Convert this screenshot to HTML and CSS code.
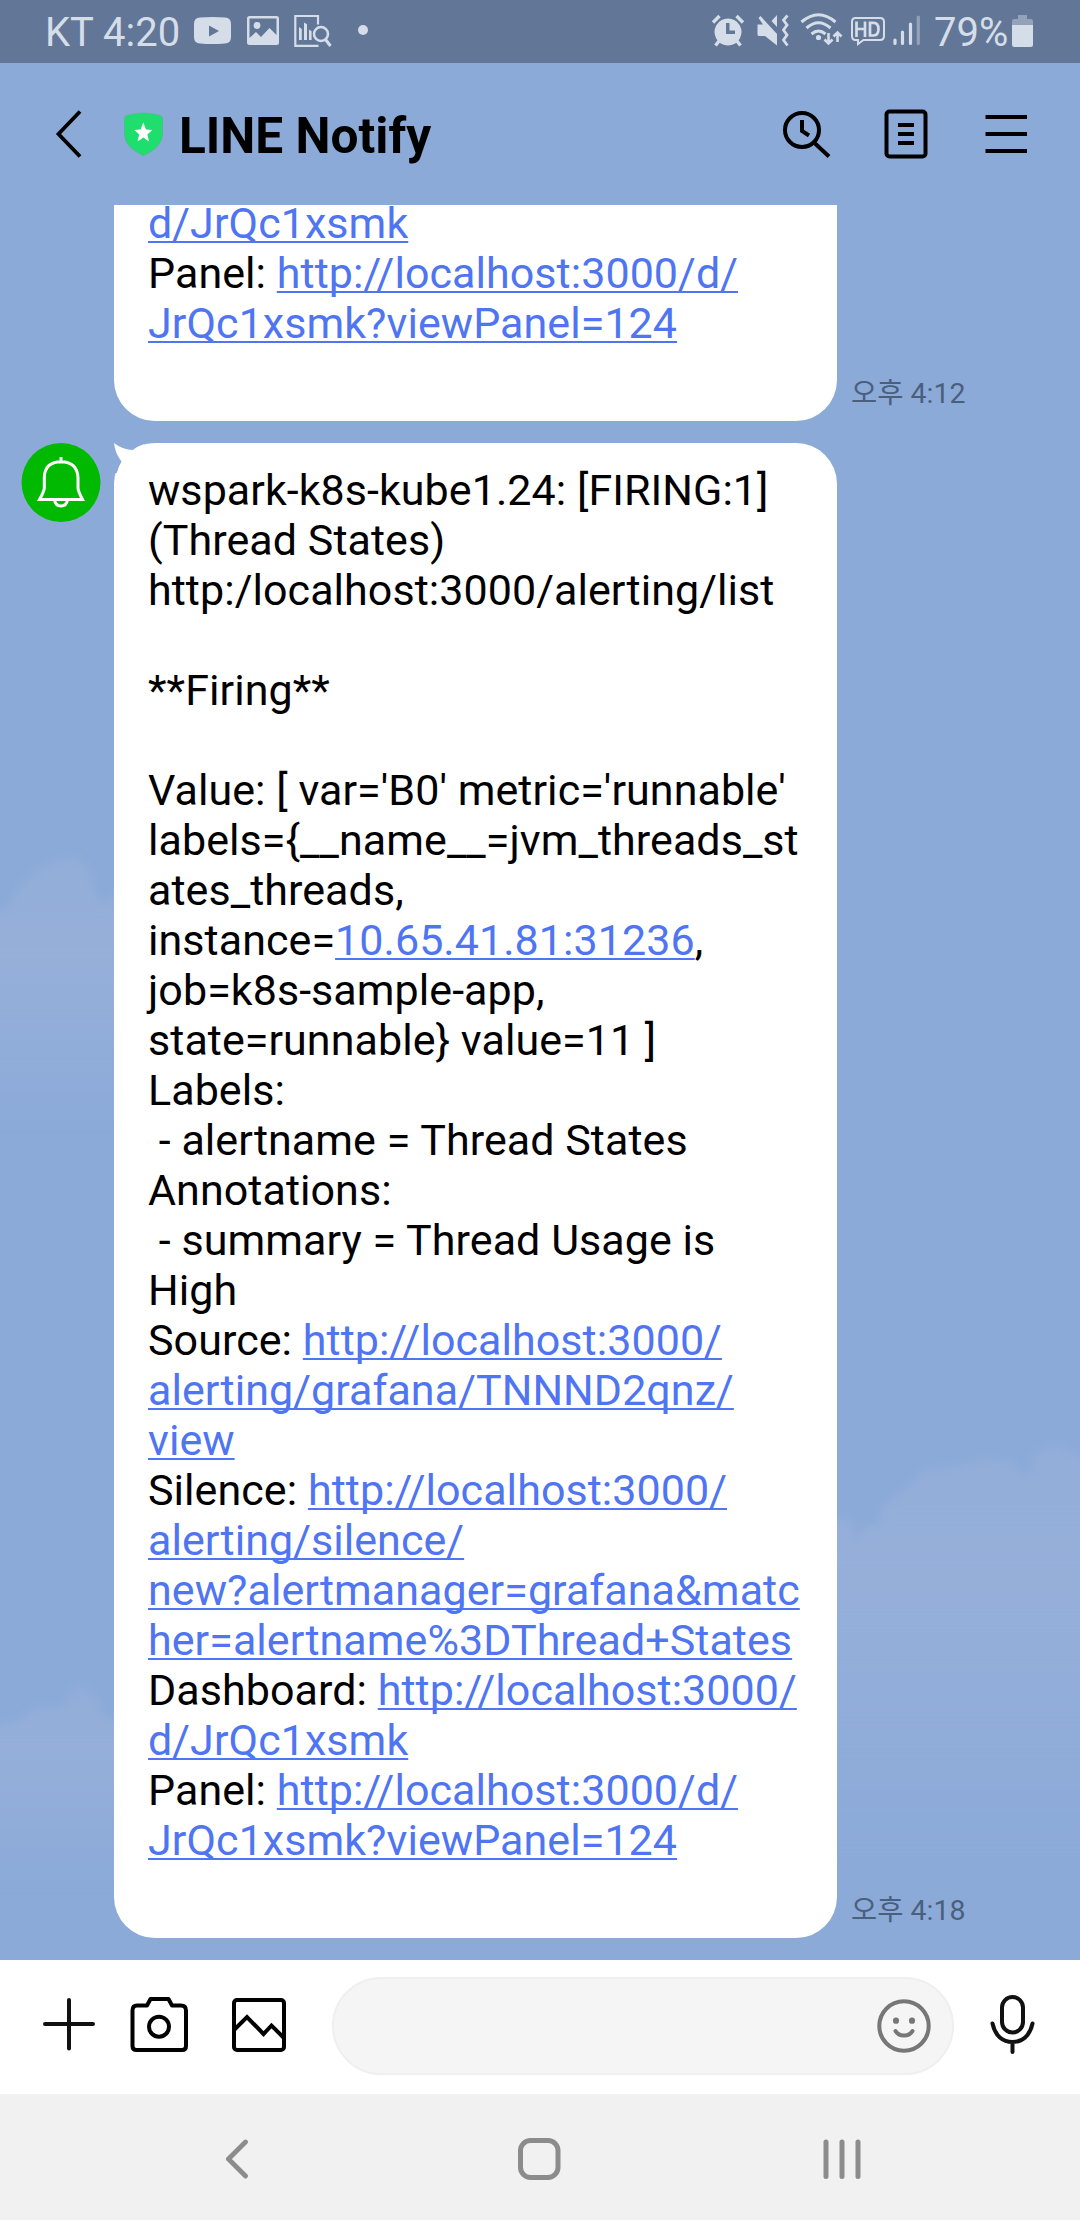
FILE: index.html
```html
<!DOCTYPE html>
<html lang="ko">
<head>
<meta charset="utf-8">
<title>LINE Notify</title>
<link rel="stylesheet" href="styles.css">
</head>
<body>
<div class="screen">
  <svg class="clouds" viewBox="0 0 1080 1960" aria-hidden="true">
    <defs>
      <linearGradient id="fadeA" gradientUnits="userSpaceOnUse" x1="0" y1="860" x2="0" y2="1130"><stop offset="0" stop-color="#98b1da" stop-opacity=".5"/><stop offset=".35" stop-color="#98b1da" stop-opacity=".8"/><stop offset="1" stop-color="#98b1da" stop-opacity="0"/></linearGradient>
      <linearGradient id="fadeB" gradientUnits="userSpaceOnUse" x1="0" y1="1445" x2="0" y2="1860"><stop offset="0" stop-color="#98b1da" stop-opacity=".5"/><stop offset=".3" stop-color="#98b1da" stop-opacity=".8"/><stop offset="1" stop-color="#98b1da" stop-opacity="0"/></linearGradient>
      <linearGradient id="fadeC" gradientUnits="userSpaceOnUse" x1="0" y1="1688" x2="0" y2="1890"><stop offset="0" stop-color="#98b1da" stop-opacity=".45"/><stop offset=".3" stop-color="#98b1da" stop-opacity=".7"/><stop offset="1" stop-color="#98b1da" stop-opacity="0"/></linearGradient>
      <filter id="soft" x="-10%" y="-10%" width="120%" height="120%"><feGaussianBlur stdDeviation="4"/></filter>
    </defs>
    <g filter="url(#soft)">
      <path fill="url(#fadeA)" d="M-20 914 10 908 17 890 35 873 55 860 75 857 90 870 92 885 100 905 107 902 130 885V1130H-20Z"/>
      <path fill="url(#fadeB)" d="M820 1520 850 1520 857 1543 865 1527 880 1523 882 1507 905 1490 925 1470 960 1466 985 1459 1010 1462 1025 1476 1035 1470 1031 1457 1052 1445 1070 1451 1100 1466V1860H820Z"/>
      <path fill="url(#fadeC)" d="M-20 1732 22 1720 35 1708 65 1706 72 1690 85 1687 98 1700 100 1715 130 1726V1890H-20Z"/>
    </g>
  </svg>

  <div class="status">
    <span class="status-text carrier">KT 4:20</span>
    <svg width="180" height="63" viewBox="192 0 180 63" fill="#d5dde8">
      <path fill-rule="evenodd" d="M200 17.600Q212.500 16.600 225 17.600 231 18 231 24V37Q231 43 225 43.500 212.500 44.500 200 43.500 194 43 194 37V24Q194 18 200 17.600ZM209 25.500V36.500L219 31Z"/>
      <path fill-rule="evenodd" d="M249.500 16H276.500Q279 16 279 18.500V42.500Q279 45 276.500 45H249.500Q247 45 247 42.500V18.500Q247 16 249.500 16ZM249.500 18.500V38L256 32 261 37 269.500 28 276.500 35V18.500Z"/>
      <circle cx="257" cy="25.500" r="3.400"/>
      <path fill="none" stroke="#d5dde8" stroke-width="2.200" d="M318 24.500V16H295.300V45.800H318.500"/>
      <path d="M299 27l2.800 2v11H299zM304 22.500l3 1.800V40h-3zM309 29.500l2.600 1.800V40H309z"/>
      <circle cx="321" cy="34" r="7" fill="none" stroke="#d5dde8" stroke-width="2.500"/>
      <path stroke="#d5dde8" stroke-width="3" d="M325.500 39.500 330.500 46"/>
      <circle cx="363" cy="30" r="5"/>
    </svg>
    <svg class="status-right" width="214" height="63" viewBox="710 0 214 63" fill="#d5dde8">
      <path fill-rule="evenodd" d="M728 18.500a13.500 13.500 0 1 0 .01 0zM726 23V34H735V30.500H729.500V23Z"/>
      <path stroke="#d5dde8" stroke-width="3.400" d="M713 22.500 719.500 16M743 22.500 736.500 16M719 41 715.500 45.500M737 41 740.500 45.500"/>
      <path d="M757.500 24.500H763L758.500 18 760.500 16 777 34V45.500L765 36H759Q757.500 36 757.500 34.500ZM777 15V27L771.500 21Z"/>
      <path fill="none" stroke="#d5dde8" stroke-width="2.800" d="M787.500 15.500 783.500 20 787 25 783.500 30 787 35 783.500 40 787.500 45.500"/>
      <path fill="none" stroke="#d5dde8" stroke-width="3" d="M801.500 22Q818.500 7.500 835.500 22M806.500 28Q818.500 17.500 830.500 28M811.500 34Q818.500 28 825.500 34"/>
      <circle cx="818.500" cy="37.500" r="2.600"/>
      <path stroke="#d5dde8" stroke-width="2.600" fill="none" d="M828.500 33V43M824.500 39.500 828.500 43.500 832.500 39.500M837.500 42V33M833.500 36.500 837.500 32.500 841.500 36.500"/>
      <path fill="none" stroke="#d5dde8" stroke-width="2" d="M855.500 18H880Q884 18 884 22V36Q884 40 880 40H863.500L858 44V40H855.500Q852 40 852 36V22Q852 18 855.500 18Z"/>
      <path fill="none" stroke="#d5dde8" stroke-width="2.700" d="M856.500 21.500V37M865 21.500V37M856.500 29H865M870 22.800H873.500Q878.500 22.800 878.500 29T873.500 35.500H870Z"/>
      <path fill="none" stroke="#d5dde8" stroke-width="3.200" stroke-linecap="round" d="M895 40V43.500M902.500 32V43.500M910.500 24V43.500"/>
      <path stroke="#93a2b9" stroke-width="3.200" stroke-linecap="round" d="M918.300 17V43.500"/>
    </svg>
    <span class="status-text percent">79%</span>
    <svg width="22" height="63" viewBox="1012 0 22 63"><path fill="#93a2b9" d="M1018 19V15H1027V19H1031Q1033 19 1033 21V26H1012V21Q1012 19 1014 19Z"/><path fill="#d5dde8" d="M1012 25H1033V44.500Q1033 47 1030.500 47H1014.500Q1012 47 1012 44.500Z"/></svg>
  </div>

  <div class="header">
    <svg width="28" height="50" viewBox="55 109 28 50" fill="none" stroke="#000" stroke-width="3.800"><path d="M80 111.500 58.500 134 80 156.500"/></svg>
    <svg class="shield" width="40" height="50" viewBox="124 109 40 50"><path fill="#20de6e" stroke="#4bbd8f" stroke-width=".8" d="M127 115.500Q143.500 110.500 160 115.500 162.500 116.300 162.500 118V134Q162.500 147 143.500 155.700 124.500 147 124.500 134V118Q124.500 116.300 127 115.500Z"/><path fill="#fff" d="M143.300 122.500 146 129.500 152.300 130 147.400 134.500 149 141.500 143.300 137.600 137.600 141.500 139.200 134.500 134.300 130 140.600 129.500Z"/></svg>
    <h1 class="title">LINE Notify</h1>
    <svg class="actions" width="250" height="54" viewBox="780 107 250 54" fill="none" stroke="#000" stroke-width="4">
      <circle cx="802" cy="130" r="17"/><path d="M814 142.500 829 156.500M802 120V131L809 135.500"/>
      <rect x="886.500" y="111.500" width="39" height="45" rx="3"/><path d="M898 125H914M898 134H914M898 143H914"/>
      <path d="M985.500 117H1027M985.500 134H1027M985.500 151H1027"/>
    </svg>
  </div>

  <div class="chat">
    <div class="row">
      <div class="bubble continued"><a>d/JrQc1xsmk</a>
Panel: <a>http://localhost:3000/d/</a>
<a>JrQc1xsmk?viewPanel=124</a>
&nbsp;</div>
      <time class="time">오후 4:12</time>
    </div>
    <div class="row">
      <svg class="avatar" width="80" height="80" viewBox="20.500 443 80 80"><circle cx="60.500" cy="482.500" r="39.500" fill="#00b900"/><g fill="none" stroke="#fff" stroke-width="3"><path d="M60.500 457V461M60.500 461.700Q43.800 462 43.800 478V488Q43.800 491 39 499.500H82Q77.500 491 77.500 488V478Q77 462 60.500 461.700Z"/><path d="M54 500Q55 506 60.500 506T67 500"/></g></svg>
      <div class="bubble"><svg class="tail" width="30" height="30" viewBox="0 0 30 30"><path fill="#8caad8" d="M0 0H30V1L19 8 7.500 19.500 0 36Z"/><path fill="#fff" d="M0 0Q9 7 19 7Q23 3.500 31 1V31H3Q4 24 7.500 18.500Q1 10 0 0Z"/></svg>wspark-k8s-kube1.24: [FIRING:1]
(Thread States)
http:/localhost:3000/alerting/list

**Firing**

Value: [ var='B0' metric='runnable'
labels={__name__=jvm_threads_st
ates_threads,
instance=<a>10.65.41.81:31236</a>,
job=k8s-sample-app,
state=runnable} value=11 ]
Labels:
 - alertname = Thread States
Annotations:
 - summary = Thread Usage is
High
Source: <a>http://localhost:3000/</a>
<a>alerting/grafana/TNNND2qnz/</a>
<a>view</a>
Silence: <a>http://localhost:3000/</a>
<a>alerting/silence/</a>
<a>new?alertmanager=grafana&amp;matc</a>
<a>her=alertname%3DThread+States</a>
Dashboard: <a>http://localhost:3000/</a>
<a>d/JrQc1xsmk</a>
Panel: <a>http://localhost:3000/d/</a>
<a>JrQc1xsmk?viewPanel=124</a>
&nbsp;</div>
      <time class="time">오후 4:18</time>
    </div>
  </div>

  <div class="composer">
    <svg width="250" height="64" viewBox="40 1993 250 64" fill="none" stroke="#000" stroke-width="4">
      <path stroke="#111" stroke-linecap="round" d="M69 2000V2048.500M45 2024H93"/>
      <path stroke-linejoin="round" d="M137 2005.500H147L150.500 1999H168.500L172 2005.500H181Q186 2005.500 186 2010.500V2046Q186 2050 182 2050H136.500Q132.500 2050 132.500 2046V2010.500Q132.500 2005.500 137 2005.500Z"/><circle cx="159" cy="2026.700" r="10"/>
      <rect x="234" y="2000" width="50" height="50" rx="3"/><path d="M234 2030 247 2017 263.500 2034 271.500 2025.500 284 2038"/>
    </svg>
    <div class="field">
      <svg width="54" height="56" viewBox="876 1998 54 56" fill="none" stroke="#777" stroke-width="4"><circle cx="903" cy="2026" r="24.700"/><g fill="#777" stroke="none"><circle cx="895" cy="2020.700" r="3.100"/><circle cx="911" cy="2020.700" r="3.100"/></g><path stroke-linecap="round" d="M894.500 2031Q897 2035.500 903 2035.500T911.500 2031"/></svg>
    </div>
    <svg class="mic" width="48" height="64" viewBox="989 1993 48 64" fill="none" stroke="#111" stroke-width="4" stroke-linecap="round"><rect x="1002" y="1997" width="21" height="35.500" rx="10.500"/><path d="M992.500 2023.500C995 2036 1003 2042 1012.500 2042S1030 2036 1032.500 2023.500M1012.500 2042V2052"/></svg>
  </div>

  <div class="nav">
    <svg width="24" height="44" viewBox="226 2137 24 44" fill="none" stroke="#8c8c8c" stroke-width="4.800" stroke-linecap="round"><path d="M245.500 2142 228.500 2159 245.500 2176"/></svg>
    <svg class="home" width="44" height="44" viewBox="516.500 2137 44 44" fill="none" stroke="#8c8c8c" stroke-width="5"><rect x="520" y="2140.500" width="37.500" height="37" rx="10"/></svg>
    <svg width="44" height="44" viewBox="820 2137 44 44" fill="none" stroke="#8c8c8c" stroke-width="5" stroke-linecap="round"><path d="M826 2142V2176.500M842 2142V2176.500M858 2142V2176.500"/></svg>
  </div>
</div>
</body>
</html>
```
FILE: styles.css
```css
body {
  margin: 0;
  font-family: Roboto, "Noto Sans CJK KR", sans-serif;
}

svg {
  display: block;
  flex: none;
}

.screen {
  position: relative;
  display: flex;
  flex-direction: column;
  width: 1080px;
  height: 2220px;
  overflow: hidden;
  background: #8caad8;
}

.clouds {
  position: absolute;
  top: 0;
  left: 0;
  width: 1080px;
  height: 1960px;
}

.status {
  display: flex;
  height: 63px;
  padding-left: 45px;
  background: #627797;
}

.status-text {
  color: #d5dde8;
  font-size: 40px;
  line-height: 65px;
  white-space: nowrap;
}

.carrier {
  width: 147px;
}

.status-right {
  margin-left: 338px;
}

.percent {
  width: 78px;
  margin-left: 10px;
}

.header {
  display: flex;
  align-items: center;
  box-sizing: border-box;
  height: 142px;
  padding-left: 55px;
}

.shield {
  margin-left: 41px;
}

.title {
  flex: 1;
  margin: 4px 0 0 15px;
  color: #000;
  font-size: 49.6px;
  font-weight: 700;
  line-height: 60px;
  white-space: nowrap;
}

.actions {
  margin-right: 50px;
}

.chat {
  position: relative;
  display: flex;
  flex-direction: column;
  justify-content: flex-end;
  gap: 22px;
  box-sizing: border-box;
  height: 1755px;
  padding: 0 0 22px 21px;
  overflow: hidden;
}

.row {
  display: flex;
  justify-content: flex-end;
  width: 936px;
}

.avatar {
  margin: 0 13px 0 0;
}

.bubble {
  position: relative;
  box-sizing: border-box;
  flex: none;
  width: 723px;
  padding: 22px 0 23px 34px;
  border-radius: 41px;
  background: #fff;
  color: #000;
  font-size: 43px;
  letter-spacing: 0.06px;
  line-height: 50px;
  white-space: pre;
}

.continued {
  border-top-left-radius: 0;
  border-top-right-radius: 0;
}

.bubble a {
  color: #4f75f2;
  text-decoration: underline;
  text-decoration-thickness: 2px;
  text-decoration-skip-ink: none;
  text-underline-offset: 3px;
}

.tail {
  position: absolute;
  top: 0;
  left: 0;
}

.time {
  align-self: flex-end;
  width: 113px;
  margin: 0 -7px 7px 14px;
  color: #4a5f7e;
  font-size: 28.5px;
  line-height: 40px;
  white-space: nowrap;
}

.composer {
  display: flex;
  align-items: center;
  box-sizing: border-box;
  height: 134px;
  padding: 0 43px 4px 40px;
  background: #fff;
}

.field {
  display: flex;
  flex: 1;
  align-items: center;
  justify-content: flex-end;
  box-sizing: border-box;
  height: 98px;
  margin: 2px 35px 0 42px;
  padding-right: 21px;
  border: 2px solid #efefef;
  border-radius: 49px;
  background: #f5f5f5;
}

.nav {
  display: flex;
  align-items: center;
  justify-content: space-between;
  box-sizing: border-box;
  height: 126px;
  padding: 4px 216px 0 226px;
  background: #f1f1f1;
}

.home {
  margin-left: 7px;
}
```
